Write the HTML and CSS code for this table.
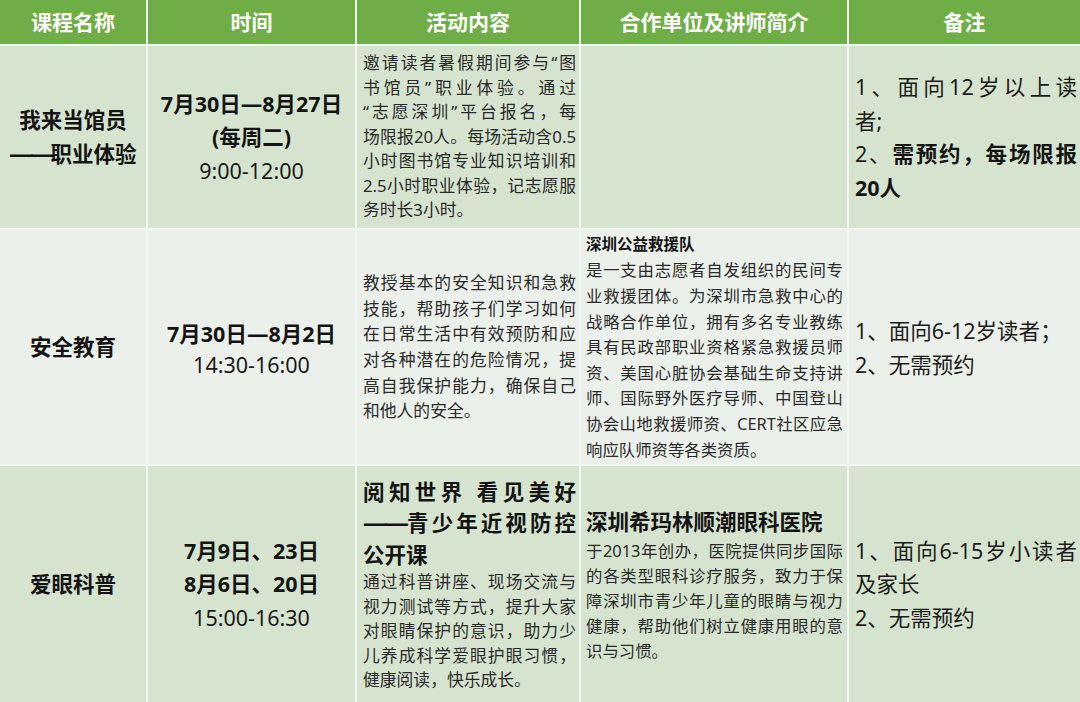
FILE: index.html
```html
<!DOCTYPE html>
<html lang="zh-CN">
<head>
<meta charset="utf-8">
<title>暑期活动安排</title>
<link rel="stylesheet" href="styles.css">
</head>
<body>
<table class="sched">
  <colgroup>
    <col class="c1"><col class="c2"><col class="c3"><col class="c4"><col class="c5">
  </colgroup>
  <thead>
    <tr class="head">
      <th>课程名称</th>
      <th>时间</th>
      <th>活动内容</th>
      <th>合作单位及讲师简介</th>
      <th class="last">备注</th>
    </tr>
  </thead>
  <tbody>
    <tr class="row r1">
      <td class="name">我来当馆员<br><span class="dash">——</span>职业体验</td>
      <td class="time"><b>7月30日—8月27日</b><br><b>(每周二)</b><br>9:00-12:00</td>
      <td class="desc d1">
        <span class="j">邀请读者暑假期间参与“图</span>
        <span class="j">书馆员”职业体验。通过</span>
        <span class="j">“志愿深圳”平台报名，每</span>
        <span class="j">场限报20人。每场活动含0.5</span>
        <span class="j">小时图书馆专业知识培训和</span>
        <span class="j">2.5小时职业体验，记志愿服</span>
        <span>务时长3小时。</span>
      </td>
      <td class="org"></td>
      <td class="note last">
        <span class="j">1、面向12岁以上读</span>
        <span>者;</span>
        <span class="j">2、<b>需预约，每场限报</b></span>
        <span><b>20人</b></span>
      </td>
    </tr>
    <tr class="row r2">
      <td class="name">安全教育</td>
      <td class="time t2"><b>7月30日—8月2日</b><br>14:30-16:00</td>
      <td class="desc d2">
        <span class="j">教授基本的安全知识和急救</span>
        <span class="j">技能，帮助孩子们学习如何</span>
        <span class="j">在日常生活中有效预防和应</span>
        <span class="j">对各种潜在的危险情况，提</span>
        <span class="j">高自我保护能力，确保自己</span>
        <span>和他人的安全。</span>
      </td>
      <td class="org o2">
        <span class="otitle">深圳公益救援队</span>
        <span class="j">是一支由志愿者自发组织的民间专</span>
        <span class="j">业救援团体。为深圳市急救中心的</span>
        <span class="j">战略合作单位，拥有多名专业教练</span>
        <span class="j">具有民政部职业资格紧急救援员师</span>
        <span class="j">资、美国心脏协会基础生命支持讲</span>
        <span class="j">师、国际野外医疗导师、中国登山</span>
        <span class="j">协会山地救援师资、CERT社区应急</span>
        <span>响应队师资等各类资质。</span>
      </td>
      <td class="note last">
        <span>1、面向6-12岁读者<span class="cjk">；</span></span>
        <span>2、无需预约</span>
      </td>
    </tr>
    <tr class="row r3">
      <td class="name">爱眼科普</td>
      <td class="time"><b>7月9日、23日</b><br><b>8月6日、20日</b><br>15:00-16:30</td>
      <td class="desc d3">
        <span class="j title">阅知世界 看见美好</span>
        <span class="j title"><span class="dash">——</span>青少年近视防控</span>
        <span class="title">公开课</span>
        <span class="j">通过科普讲座、现场交流与</span>
        <span class="j">视力测试等方式，提升大家</span>
        <span class="j">对眼睛保护的意识，助力少</span>
        <span class="j">儿养成科学爱眼护眼习惯，</span>
        <span>健康阅读，快乐成长。</span>
      </td>
      <td class="org o3">
        <span class="otitle big">深圳希玛林顺潮眼科医院</span>
        <span class="j">于2013年创办，医院提供同步国际</span>
        <span class="j">的各类型眼科诊疗服务，致力于保</span>
        <span class="j">障深圳市青少年儿童的眼睛与视力</span>
        <span class="j">健康，帮助他们树立健康用眼的意</span>
        <span>识与习惯。</span>
      </td>
      <td class="note last">
        <span class="j">1、面向6-15岁小读者</span>
        <span>及家长</span>
        <span>2、无需预约</span>
      </td>
    </tr>
  </tbody>
</table>
</body>
</html>
```

FILE: styles.css
```css
html, body {
  margin: 0;
  padding: 0;
  background: #ffffff;
}

body {
  font-family: "Noto Sans", "Noto Sans CJK SC", sans-serif;
  color: #1c1c1c;
}

.sched {
  width: 1080px;
  table-layout: fixed;
  border-collapse: separate;
  border-spacing: 0;
}

.c1 { width: 148px; }
.c2 { width: 209px; }
.c3 { width: 224px; }
.c4 { width: 268px; }
.c5 { width: 231px; }

.sched th,
.sched td {
  box-sizing: border-box;
  padding: 0;
  border-right: 2px solid #f3f7f1;
  border-bottom: 2px solid #f3f7f1;
  vertical-align: middle;
  overflow: hidden;
}

.sched .last {
  border-right: none;
}

.head th {
  height: 46px;
  background: #6fad47;
  color: #ffffff;
  font-size: 21px;
  font-weight: 700;
  text-align: center;
  line-height: 30px;
}

.r1 td { height: 184px; background: #d6e4cf; }
.r2 td { height: 236px; background: #ecf0ea; }
.r3 td { height: 236px; background: #d6e4cf; border-bottom: none; }

.dash {
  display: inline-block;
  font-family: "Noto Sans", sans-serif;
  letter-spacing: -3px;
  padding-right: 4px;
  transform: scaleX(1.15);
  transform-origin: left center;
}

.cjk {
  font-family: "Noto Sans CJK SC", sans-serif;
}

.name {
  text-align: center;
  font-size: 21.5px;
  font-weight: 700;
  line-height: 34px;
  color: #141414;
}

.time {
  text-align: center;
  font-size: 21.5px;
  line-height: 33.5px;
  color: #1a1a1a;
}

.time b {
  font-weight: 700;
  color: #141414;
}

.t2 {
  line-height: 31px;
  padding-top: 4px !important;
}

.desc {
  padding: 0 3px 0 6px !important;
  font-size: 16.8px;
  line-height: 24.5px;
  color: #2a2a2a;
}

.d2 {
  line-height: 25.6px;
}

.desc > span,
.org > span,
.note > span {
  display: block;
  white-space: nowrap;
}

.j {
  text-align: justify;
  text-align-last: justify;
}

.title {
  font-size: 21.5px;
  font-weight: 700;
  line-height: 31.5px;
  color: #141414;
}

.org {
  padding: 0 4px 0 5px !important;
  font-size: 16.4px;
  line-height: 25.6px;
  color: #2a2a2a;
}

.o3 {
  line-height: 25px;
}

.otitle {
  font-weight: 700;
  font-size: 15.5px;
  color: #141414;
}

.otitle.big {
  font-size: 21.5px;
  line-height: 33px;
}

.note {
  padding: 0 3px 0 6px !important;
  font-size: 21.5px;
  line-height: 33.5px;
  color: #1c1c1c;
}

.note b {
  font-weight: 700;
  color: #141414;
}
```
